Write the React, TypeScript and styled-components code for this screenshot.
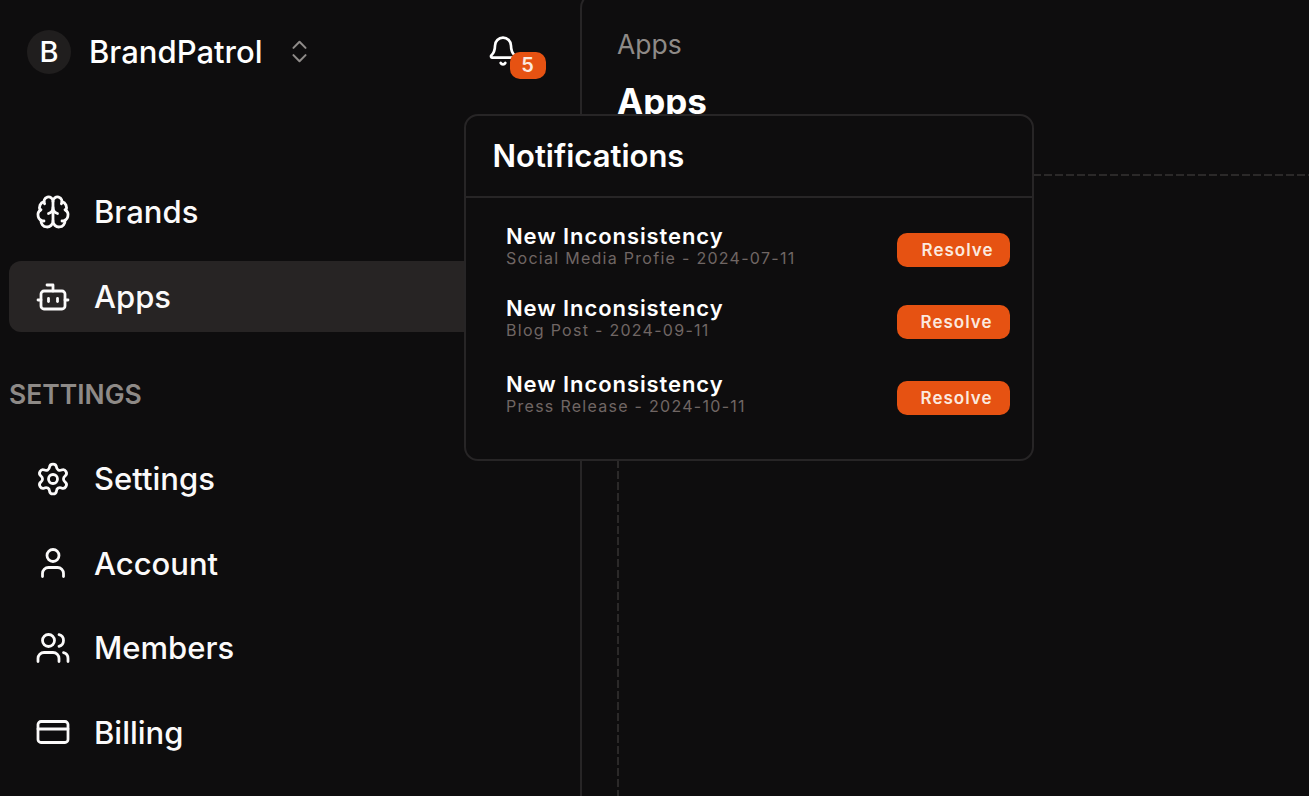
import React from 'react';
import styled, { createGlobalStyle } from 'styled-components';
import { Brain, Bot, Settings, User, Users, CreditCard, Bell, ChevronsUpDown } from 'lucide-react';

const Global = createGlobalStyle`
  html, body { margin: 0; padding: 0; height: 100%; background: #0e0d0e; overflow: hidden; }
  #root { height: 100%; }
  * { box-sizing: border-box; }
`;

const Page = styled.div`
  position: relative;
  display: flex;
  width: 1309px;
  height: 796px;
  overflow: hidden;
  background: #0e0d0e;
  color: #fff;
  font-family: Inter, "Liberation Sans", sans-serif;
`;

const Sidebar = styled.aside`
  width: 580px;
  flex: none;
  padding: 0 0 0 9px;
  display: flex;
  flex-direction: column;
`;

const Header = styled.div`
  height: 103px;
  display: flex;
  align-items: center;
  padding-left: 18px;
`;

const Avatar = styled.div`
  width: 44px;
  height: 44px;
  flex: none;
  border-radius: 50%;
  background: #201e1e;
  display: flex;
  align-items: center;
  justify-content: center;
  font-size: 29px;
  font-weight: 500;
`;

const BrandName = styled.div`
  margin-left: 18px;
  font-size: 31px;
  font-weight: 500;
  width: 195.5px;
  flex: none;
`;

const Switcher = styled(ChevronsUpDown)`
  color: #8f8b89;
  flex: none;
`;

const BellWrap = styled.div`
  position: relative;
  margin-left: 173.5px;
  width: 32px;
  height: 36px;
  margin-top: 2px;
  flex: none;
`;

const Badge = styled.span`
  position: absolute;
  left: 23px;
  top: 17px;
  width: 36px;
  height: 27px;
  padding-right: 1px;
  border-radius: 10px;
  background: #e65212;
  color: #fbe9df;
  display: flex;
  align-items: center;
  justify-content: center;
  font-size: 20px;
  font-weight: 600;
`;

const Nav = styled.nav`
  display: flex;
  flex-direction: column;
  margin-top: 73px;
`;

const NavItem = styled.div<{ $active?: boolean }>`
  height: 71px;
  margin-top: ${(p) => (p.$active ? '14px' : '0')};
  border-radius: 12px;
  display: flex;
  align-items: center;
  padding-left: 26px;
  gap: 23px;
  font-size: 31px;
  font-weight: 500;
  background: ${(p) => (p.$active ? '#272424' : 'transparent')};
  color: #fbfafa;
`;

const SectionLabel = styled.div`
  margin-top: 47px;
  margin-bottom: 34px;
  height: 30px;
  line-height: 30px;
  font-size: 26.5px;
  font-weight: 600;
  color: #8e8a87;
`;

const SettingsList = styled.div`
  display: flex;
  flex-direction: column;
  gap: 13.6px;
`;

const Main = styled.main`
  flex: 1;
  position: relative;
  margin-top: -8px;
  border-left: 2px solid #272526;
  border-top: 2px solid #272526;
  border-top-left-radius: 16px;
  padding: 33px 0 0 35px;
`;

const Crumb = styled.div`
  font-size: 26.5px;
  line-height: 34px;
  color: #8e8a87;
`;

const Title = styled.h1`
  margin: 19px 0 0;
  font-size: 35px;
  line-height: 42px;
  font-weight: 700;
  color: #fff;
`;

const DashH = styled.div`
  position: absolute;
  left: 0;
  right: 0;
  top: 180px;
  height: 2px;
  background: repeating-linear-gradient(90deg, #2b2929 0 8px, transparent 8px 11px);
`;

const DashV = styled.div`
  position: absolute;
  left: 35px;
  top: 180px;
  bottom: 0;
  width: 2px;
  background: repeating-linear-gradient(180deg, #2b2929 0 8px, transparent 8px 11px);
`;

const Popover = styled.section`
  position: absolute;
  left: 464px;
  top: 114px;
  width: 570px;
  height: 347px;
  background: #0e0d0e;
  border: 2px solid #272526;
  border-radius: 14px;
  display: flex;
  flex-direction: column;
`;

const PopHead = styled.div`
  height: 82px;
  flex: none;
  border-bottom: 2px solid #272526;
  padding: 0 0 2px 26.5px;
  display: flex;
  align-items: center;
  font-size: 31px;
  font-weight: 600;
`;

const Rows = styled.div`
  display: flex;
  flex-direction: column;
  padding: 35px 22px 0 40px;
`;

const Row = styled.div<{ $gap: number }>`
  display: flex;
  align-items: center;
  justify-content: space-between;
  height: 34px;
  margin-bottom: ${(p) => p.$gap}px;
`;

const RowText = styled.div`
  display: flex;
  flex-direction: column;
  margin-bottom: 8px;
`;

const RowTitle = styled.div`
  font-size: 22px;
  line-height: 24px;
  font-weight: 600;
  letter-spacing: 0.92px;
  color: #fff;
`;

const RowSub = styled.div`
  font-size: 16px;
  line-height: 20px;
  letter-spacing: 1.28px;
  color: #706664;
`;

const Resolve = styled.button<{ $shift: number }>`
  width: 113px;
  height: 34px;
  border: 0;
  border-radius: 10px;
  background: #e65212;
  color: #fbe9df;
  font-family: inherit;
  font-size: 17px;
  font-weight: 600;
  letter-spacing: 1px;
  padding: 0 0 0 ${(p) => p.$shift}px;
`;

const navIcon = { size: 36, strokeWidth: 1.85 };

const rows = [
  { sub: 'Social Media Profie - 2024-07-11', gap: 38, shift: 8 },
  { sub: 'Blog Post - 2024-09-11', gap: 42, shift: 6 },
  { sub: 'Press Release - 2024-10-11', gap: 0, shift: 6 },
];

export default function App() {
  return (
    <Page>
      <Global />
      <Sidebar>
        <Header>
          <Avatar>B</Avatar>
          <BrandName>BrandPatrol</BrandName>
          <Switcher size={29} strokeWidth={1.7} />
          <BellWrap>
            <Bell size={32} strokeWidth={2} />
            <Badge>5</Badge>
          </BellWrap>
        </Header>
        <Nav>
          <NavItem><Brain {...navIcon} />Brands</NavItem>
          <NavItem $active><Bot {...navIcon} />Apps</NavItem>
        </Nav>
        <SectionLabel>SETTINGS</SectionLabel>
        <SettingsList>
          <NavItem><Settings {...navIcon} />Settings</NavItem>
          <NavItem><User {...navIcon} />Account</NavItem>
          <NavItem><Users {...navIcon} />Members</NavItem>
          <NavItem><CreditCard {...navIcon} />Billing</NavItem>
        </SettingsList>
      </Sidebar>
      <Main>
        <Crumb>Apps</Crumb>
        <Title>Apps</Title>
        <DashH />
        <DashV />
      </Main>
      <Popover>
        <PopHead>Notifications</PopHead>
        <Rows>
          {rows.map((r) => (
            <Row key={r.sub} $gap={r.gap}>
              <RowText>
                <RowTitle>New Inconsistency</RowTitle>
                <RowSub>{r.sub}</RowSub>
              </RowText>
              <Resolve $shift={r.shift}>Resolve</Resolve>
            </Row>
          ))}
        </Rows>
      </Popover>
    </Page>
  );
}
